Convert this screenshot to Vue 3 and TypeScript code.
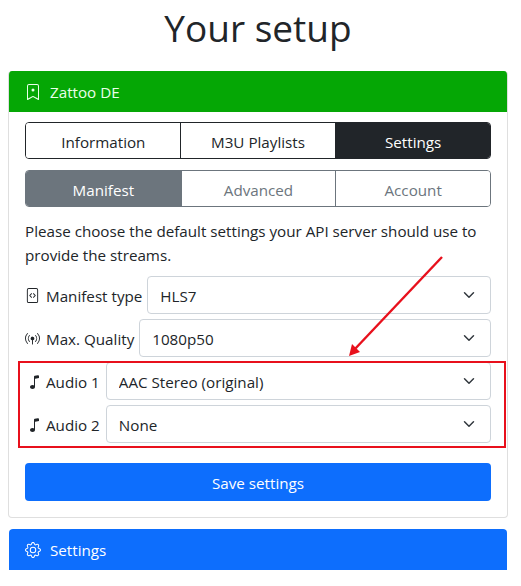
<script setup lang="ts">
import { ref } from 'vue'

interface Row {
  label: string
  icon: string
  value: string
  options: string[]
}

const mainTabs = ['Information', 'M3U Playlists', 'Settings']
const subTabs = ['Manifest', 'Advanced', 'Account']
const activeMain = ref('Settings')
const activeSub = ref('Manifest')

const rows = ref<Row[]>([
  { label: 'Manifest type', icon: 'code', value: 'HLS7', options: ['HLS7', 'HLS5', 'DASH'] },
  { label: 'Max. Quality', icon: 'pin', value: '1080p50', options: ['1080p50', '720p50', '576p'] },
  { label: 'Audio 1', icon: 'note', value: 'AAC Stereo (original)', options: ['AAC Stereo (original)', 'None'] },
  { label: 'Audio 2', icon: 'note', value: 'None', options: ['None', 'AAC Stereo (original)'] },
])
</script>

<template>
  <div class="page">
    <h1 class="title">Your setup</h1>

    <section class="card">
      <header class="card_head green">
        <svg class="head_icon" viewBox="0 0 16 16" fill="currentColor">
          <path d="M2 2a2 2 0 0 1 2-2h8a2 2 0 0 1 2 2v13.5a.5.5 0 0 1-.777.416L8 13.101l-5.223 2.815A.5.5 0 0 1 2 15.5V2zm2-1a1 1 0 0 0-1 1v12.566l4.723-2.482a.5.5 0 0 1 .554 0L13 14.566V2a1 1 0 0 0-1-1H4z" />
          <circle cx="8" cy="6" r="1.5" />
        </svg>
        <span>Zattoo DE</span>
      </header>

      <div class="card_body">
        <div class="tabs dark">
          <button
            v-for="t in mainTabs"
            :key="t"
            class="tab"
            :class="{ active: t === activeMain }"
            @click="activeMain = t"
          >{{ t }}</button>
        </div>

        <div class="tabs grey">
          <button
            v-for="t in subTabs"
            :key="t"
            class="tab"
            :class="{ active: t === activeSub }"
            @click="activeSub = t"
          >{{ t }}</button>
        </div>

        <p class="intro">Please choose the default settings your API server should use to provide the streams.</p>

        <div class="rows">
          <div v-for="r in rows" :key="r.label" class="row">
            <label class="row_label" :class="r.icon">
              <svg v-if="r.icon === 'code'" class="row_icon" viewBox="0 0 16 16" fill="currentColor">
                <path d="M6.646 5.646a.5.5 0 1 1 .708.708L5.707 8l1.647 1.646a.5.5 0 0 1-.708.708l-2-2a.5.5 0 0 1 0-.708l2-2zm2.708 0a.5.5 0 1 0-.708.708L10.293 8 8.646 9.646a.5.5 0 0 0 .708.708l2-2a.5.5 0 0 0 0-.708l-2-2z" />
                <path d="M2 2a2 2 0 0 1 2-2h8a2 2 0 0 1 2 2v12a2 2 0 0 1-2 2H4a2 2 0 0 1-2-2V2zm10-1H4a1 1 0 0 0-1 1v12a1 1 0 0 0 1 1h8a1 1 0 0 0 1-1V2a1 1 0 0 0-1-1z" />
              </svg>
              <svg v-else-if="r.icon === 'pin'" class="row_icon" viewBox="0 0 16 16" fill="currentColor">
                <path d="M3.05 3.05a7 7 0 0 0 0 9.9.5.5 0 0 1-.707.707 8 8 0 0 1 0-11.314.5.5 0 0 1 .707.707zm2.122 2.122a4 4 0 0 0 0 5.656.5.5 0 1 1-.708.708 5 5 0 0 1 0-7.072.5.5 0 0 1 .708.708zm5.656-.708a.5.5 0 0 1 .708 0 5 5 0 0 1 0 7.072.5.5 0 1 1-.708-.708 4 4 0 0 0 0-5.656.5.5 0 0 1 0-.708zm2.122-2.12a.5.5 0 0 1 .707 0 8 8 0 0 1 0 11.313.5.5 0 0 1-.707-.707 7 7 0 0 0 0-9.9.5.5 0 0 1 0-.707zM10 8a2 2 0 0 1-1.5 1.937V14a.5.5 0 0 1-1 0V9.937A2 2 0 1 1 10 8z" />
              </svg>
              <svg v-else class="row_icon" viewBox="0 0 16 16" fill="currentColor">
                <path d="M9 13c0 1.105-1.12 2-2.5 2S4 14.105 4 13s1.12-2 2.5-2 2.5.895 2.5 2z" />
                <path fill-rule="evenodd" d="M9 3v10H8V3h1z" />
                <path d="M8 2.82a1 1 0 0 1 .804-.98l3-.6A1 1 0 0 1 13 2.22V4L8 5V2.82z" />
              </svg>
              <span>{{ r.label }}</span>
            </label>
            <select v-model="r.value" class="row_select">
              <option v-for="o in r.options" :key="o" :value="o">{{ o }}</option>
            </select>
          </div>
        </div>

        <button class="save">Save settings</button>
      </div>
    </section>

    <section class="card second">
      <header class="card_head blue">
        <svg class="head_icon" viewBox="0 0 16 16" fill="currentColor">
          <path d="M8 4.754a3.246 3.246 0 1 0 0 6.492 3.246 3.246 0 0 0 0-6.492zM5.754 8a2.246 2.246 0 1 1 4.492 0 2.246 2.246 0 0 1-4.492 0z" />
          <path d="M9.796 1.343c-.527-1.79-3.065-1.79-3.592 0l-.094.319a.873.873 0 0 1-1.255.52l-.292-.16c-1.64-.892-3.433.902-2.54 2.541l.159.292a.873.873 0 0 1-.52 1.255l-.319.094c-1.79.527-1.79 3.065 0 3.592l.319.094a.873.873 0 0 1 .52 1.255l-.16.292c-.892 1.64.901 3.434 2.541 2.54l.292-.159a.873.873 0 0 1 1.255.52l.094.319c.527 1.79 3.065 1.79 3.592 0l.094-.319a.873.873 0 0 1 1.255-.52l.292.16c1.64.893 3.434-.902 2.54-2.541l-.159-.292a.873.873 0 0 1 .52-1.255l.319-.094c1.79-.527 1.79-3.065 0-3.592l-.319-.094a.873.873 0 0 1-.52-1.255l.16-.292c.893-1.64-.902-3.433-2.541-2.54l-.292.159a.873.873 0 0 1-1.255-.52l-.094-.319zm-2.633.283c.246-.835 1.428-.835 1.674 0l.094.319a1.873 1.873 0 0 0 2.693 1.115l.291-.16c.764-.415 1.6.42 1.184 1.185l-.159.292a1.873 1.873 0 0 0 1.116 2.692l.318.094c.835.246.835 1.428 0 1.674l-.319.094a1.873 1.873 0 0 0-1.115 2.693l.16.291c.415.764-.42 1.6-1.185 1.184l-.291-.159a1.873 1.873 0 0 0-2.693 1.116l-.094.318c-.246.835-1.428.835-1.674 0l-.094-.319a1.873 1.873 0 0 0-2.692-1.115l-.292.16c-.764.415-1.6-.42-1.184-1.185l.159-.291A1.873 1.873 0 0 0 1.945 8.93l-.319-.094c-.835-.246-.835-1.428 0-1.674l.319-.094A1.873 1.873 0 0 0 3.06 4.377l-.16-.292c-.415-.764.42-1.6 1.185-1.184l.292.159a1.873 1.873 0 0 0 2.692-1.115l.094-.319z" />
        </svg>
        <span>Settings</span>
      </header>
    </section>

    <!-- annotation drawn over the screenshot -->
    <div class="mark_box"></div>
    <svg class="mark_arrow" viewBox="0 0 521 586">
      <line x1="442" y1="257" x2="354" y2="350" stroke="#e8101c" stroke-width="2.4" />
      <polygon points="349,356 352,344 360,352" fill="#e8101c" />
    </svg>
  </div>
</template>

<style>
html,
body {
  margin: 0;
  background: #fff;
}
</style>

<style scoped>
.page {
  position: relative;
  height: 586px;
  box-sizing: border-box;
  padding: 0 13px 0 8px;
  overflow: hidden;
  font-family: "Open Sans", "Noto Sans", sans-serif;
  font-size: 15.2px;
  line-height: 24px;
  color: #212529;
}
.title {
  margin: 0;
  height: 70px;
  padding-top: 4px;
  box-sizing: border-box;
  text-align: center;
  font-size: 37px;
  font-weight: 400;
  line-height: 48px;
}
.card {
  border: 1px solid #dfdfdf;
  border-top: 0;
  border-radius: 4px;
  overflow: hidden;
  margin-top: 1px;
}
.second {
  margin-top: 11px;
  border: 0;
  border-radius: 4px 4px 0 0;
  padding: 0 1px;
}
.card_head {
  height: 41px;
  display: flex;
  align-items: center;
  gap: 9px;
  padding-left: 16px;
  color: #fff;
}
.green {
  background: #05a705;
  color: #eaffea;
}
.blue {
  background: #0d6efd;
  border-radius: 4px 4px 0 0;
}
.head_icon {
  width: 16px;
  height: 16px;
  flex: none;
}
.card_body {
  padding: 10px 16px 16px;
}
.tabs {
  display: grid;
  grid-template-columns: repeat(3, 1fr);
  height: 37px;
  margin-bottom: 11px;
  border: 1px solid #212529;
  border-radius: 4px;
  overflow: hidden;
  box-sizing: border-box;
}
.tab {
  border: 0;
  border-left: 1px solid #212529;
  background: #fff;
  font: inherit;
  padding: 2px 0 0;
  color: #212529;
}
.tab:first-child {
  border-left: 0;
}
.dark .tab:nth-child(2) {
  margin-left: -1px;
}
.dark .tab.active {
  background: #212529;
  color: #fff;
}
.grey {
  border-color: #6c757d;
}
.grey .tab {
  border-left-color: #6c757d;
  color: #6c757d;
}
.grey .tab.active {
  background: #6c757d;
  color: #fff;
}
.intro {
  margin: 12px 0 9px;
}
.rows {
  display: flex;
  flex-direction: column;
  gap: 5px;
}
.row {
  display: flex;
  height: 38px;
}
.row_label {
  display: flex;
  align-items: center;
  gap: 6px;
  padding: 1px 5px 0 0;
  white-space: nowrap;
}
.row_label.note {
  padding-right: 6px;
}
.row_icon {
  width: 15px;
  height: 15px;
  flex: none;
}
.note .row_icon {
  width: 16px;
  height: 16px;
  margin-left: 1px;
  margin-right: -2px;
}
.row_select {
  flex: 1;
  min-width: 0;
  appearance: none;
  height: 38px;
  padding: 1px 36px 0 12px;
  border: 1px solid #ced4da;
  border-radius: 4px;
  color: #212529;
  font: inherit;
  background: #fff url("data:image/svg+xml,%3csvg xmlns='http://www.w3.org/2000/svg' viewBox='0 0 16 16'%3e%3cpath fill='none' stroke='%23343a40' stroke-linecap='round' stroke-linejoin='round' stroke-width='2' d='M2 5l6 6 6-6'/%3e%3c/svg%3e") no-repeat right 14px center / 14px 12px;
}
.save {
  display: block;
  width: 100%;
  height: 38px;
  margin-top: 20px;
  padding: 1px 0 0;
  border: 0;
  border-radius: 4px;
  background: #0d6efd;
  color: #fff;
  font: inherit;
}
.mark_box {
  position: absolute;
  left: 18px;
  top: 361px;
  width: 484px;
  height: 83px;
  border: 2px solid #e8101c;
  pointer-events: none;
}
.mark_arrow {
  position: absolute;
  left: 0;
  top: 0;
  width: 521px;
  height: 586px;
  pointer-events: none;
}
</style>
